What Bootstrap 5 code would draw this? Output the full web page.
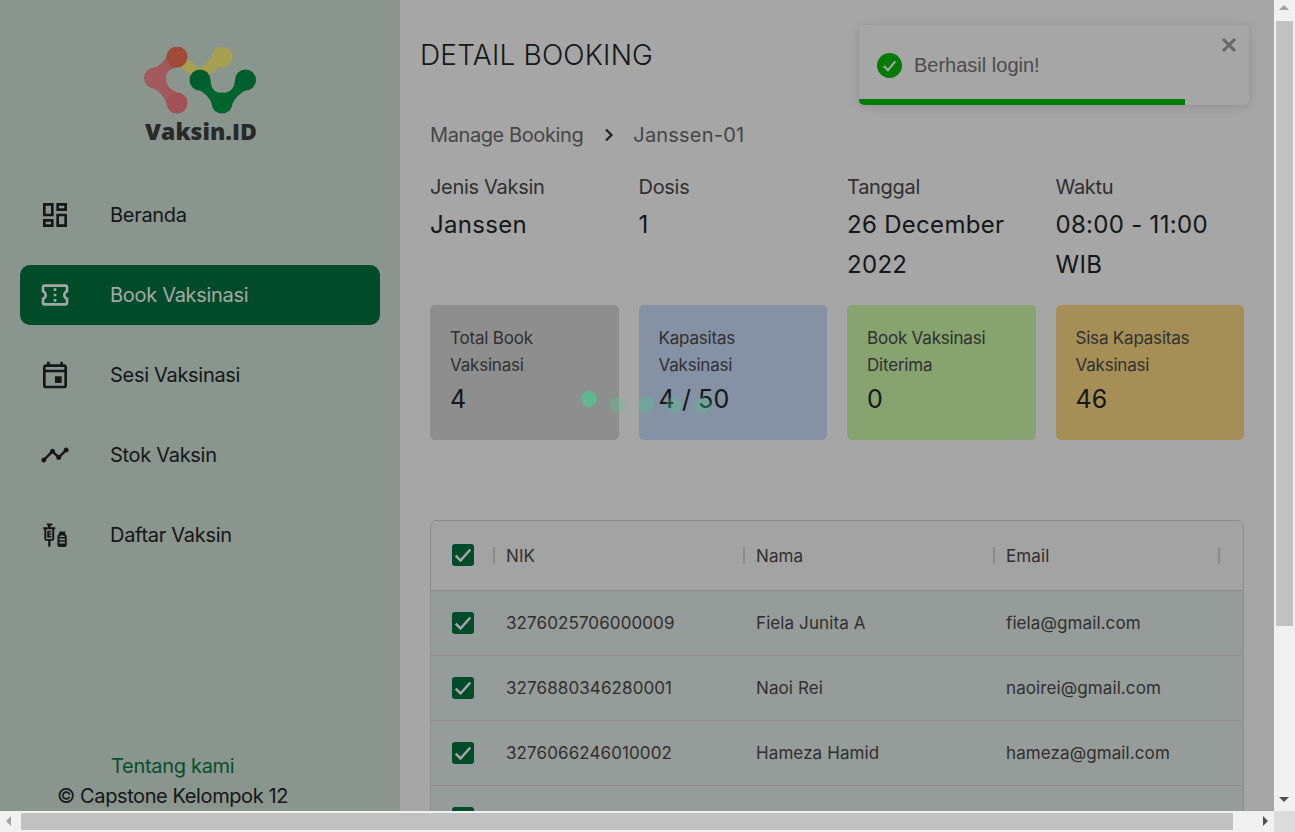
<!DOCTYPE html>
<html lang="en">
<head>
<meta charset="UTF-8">
<title>Vaksin.ID - Detail Booking</title>
<link href="https://cdn.jsdelivr.net/npm/bootstrap@5.3.0/dist/css/bootstrap.min.css" rel="stylesheet">
<style>
html, body { height: 100%; overflow: hidden; }
body { font-family: "Inter", "Liberation Sans", sans-serif; color: #212529; background: #fff; }
.shell { width: 1295px; height: 832px; }
.viewport { height: 811px; }
.frame { width: 1274px; height: 811px; overflow: hidden; }
.side { width: 400px; height: 811px; background: #d3e5d9; }
.brand { height: 185px; padding-top: 47px; }
.brand-name { font-family: "Open Sans", sans-serif; font-weight: 800; font-size: 23px; line-height: 22px; color: #404040; margin: 3px 0 0 2px; }
.side-link { height: 60px; margin: 0 20px 20px; padding-left: 19px; gap: 39px; border-radius: 10px; color: #212529; text-decoration: none; font-size: 20px; letter-spacing: -.3px; }
.side-link.active-link { background: #00733f; color: #fff; }
.side-link svg { width: 32px; height: 32px; fill: currentColor; flex: none; }
.side-foot { font-size: 20px; line-height: 30px; letter-spacing: -.4px; padding-left: 57px; margin-top: auto; height: 60px; }
.side-foot a { color: #0a7a43; text-decoration: none; margin-left: 54px; display: block; letter-spacing: -.3px; }
.page-main { width: 874px; height: 811px; padding: 0 30px; overflow: hidden; }
.page-title { font-size: 28px; font-weight: 300; line-height: 34px; margin: 38px 0 0 -10px; letter-spacing: .2px; color: #212529; }
.crumbs { margin-top: 51px; height: 24px; line-height: 24px; font-size: 20px; letter-spacing: -.4px; color: #6c6c6c; gap: 18px; }
.crumbs .crumb-now { letter-spacing: .2px; }
.crumbs svg { width: 14px; height: 14px; fill: none; stroke: #333; stroke-width: 2.2; margin-left: 1px; margin-right: -1px; }
.info-grid { display: grid; grid-template-columns: repeat(4, 188.5px); column-gap: 20px; }
.info-grid.top-info { margin-top: 26px; height: 132px; }
.info-label { font-size: 20px; line-height: 28px; letter-spacing: -.3px; color: #4a4a4a; }
.info-value { font-size: 24px; line-height: 40px; letter-spacing: .3px; margin-top: 4px; }
.stat-box { height: 135px; border-radius: 5px; padding: 20px; }
.stat-box .stat-name { font-size: 17px; line-height: 27px; letter-spacing: -.2px; color: #4a4a4a; }
.stat-box .stat-num { font-size: 25px; line-height: 32px; margin-top: 4px; letter-spacing: .1px; }
.stat-grey { background: #dadada; }
.stat-blue { background: #ccdffc; }
.stat-green { background: #d0fcac; }
.stat-yellow { background: #ffdc85; }
.grid-wrap { margin-top: 80px; width: 814px; border: 1px solid #d8d8d8; border-radius: 6px 6px 0 0; overflow: hidden; isolation: isolate; }
.grid-wrap .table { margin: 0; table-layout: fixed; width: 812px; font-size: 17px; letter-spacing: .1px; }
.grid-wrap th, .grid-wrap td { padding: 2px 0 0 12px; vertical-align: middle; font-weight: 400; border-color: #dcdcdc; color: #4a4a4a; }
.grid-wrap thead th { height: 69px; background: #fafafa; position: relative; border-bottom-color: #d8d8d8; }
.grid-wrap tbody td { height: 65px; background: #e5f0ec; }
.col-check { width: 63px; }
.col-wide { width: 250px; }
.col-end { width: 249px; }
.grid-wrap th.check-cell, .grid-wrap td.check-cell { padding: 0 0 0 21px; }
.col-sep { position: absolute; right: -1px; top: 26px; width: 2px; height: 17px; background: #d4d4d4; z-index: 1; }
.col-sep.sep-start { left: 62px; right: auto; }
.col-sep.sep-last { right: 23px; }
.tick { width: 22px; height: 22px; background: #00733f; border-radius: 3px; }
.tick svg { width: 22px; height: 22px; fill: none; stroke: #fff; stroke-width: 2.1; }
.toast-box { position: absolute; left: 859px; top: 25px; width: 390px; height: 80px; background: #fff; border-radius: 5px; box-shadow: 0 1px 10px rgba(0,0,0,.1), 0 2px 15px rgba(0,0,0,.05); overflow: hidden; font-family: "Liberation Sans", sans-serif; font-size: 20px; color: #757575; padding: 0 18px; gap: 12px; }
.toast-check { width: 25px; height: 25px; }
.toast-x { position: absolute; right: 12px; top: 12px; width: 16px; height: 16px; stroke: #9d9d9d; stroke-width: 3; }
.toast-bar { position: absolute; left: 0; bottom: 0; height: 6px; width: 326px; background: #07bc0c; }
.dim-layer { position: absolute; left: 0; top: 0; width: 1274px; height: 811px; background: rgba(0,0,0,.35); }
.dot { position: absolute; width: 16px; height: 16px; border-radius: 50%; background: #4ec98e; }
.vbar { width: 21px; height: 811px; background: #f1f1f1; padding: 21px 2px; position: relative; }
.vthumb { width: 17px; height: 605px; background: #c1c1c1; }
.hbar { height: 21px; background: #f1f1f1; padding: 2px 0 2px 21px; position: relative; }
.hthumb { width: 1212px; height: 17px; background: #c1c1c1; }
.sb-corner { position: absolute; right: 0; top: 0; width: 21px; height: 21px; background: #dcdcdc; }
.arrow { position: absolute; width: 0; height: 0; border: 5px solid transparent; }
.arrow-up { left: 5px; top: 5px; border-bottom-color: #a3a3a3; border-top: 0; }
.arrow-down { left: 5px; bottom: 9px; border-top-color: #505050; border-bottom: 0; }
.arrow-left { left: 6px; top: 5px; border-right-color: #a3a3a3; border-left: 0; }
.arrow-right { right: 27px; top: 5px; border-left-color: #505050; border-right: 0; }
</style>
</head>
<body>
<div class="shell">
  <div class="viewport d-flex">
    <div class="frame d-flex position-relative">
      <aside class="side d-flex flex-column flex-shrink-0">
        <div class="brand d-flex flex-column align-items-center">
          <svg width="112" height="70" viewBox="145 47 112 70" fill="none" stroke-linecap="round" stroke-linejoin="round">
            <path d="M178 57 201 76 223 57" stroke="#fff67b" stroke-width="11"/>
            <path fill="#fb8a90" d="M170.800 49.300Q165.600 66.400 148.300 70.300L147.700 85Q165.700 91.500 170.200 110L178 92.500Q167 88 167 78 167 69 178 67.500Z"/>
            <circle cx="178" cy="57" r="10.500" fill="#f67355"/>
            <circle cx="155.500" cy="78" r="10.500" fill="#fb8a90"/>
            <circle cx="178" cy="103" r="10.500" fill="#f67e84"/>
            <circle cx="223" cy="57" r="10.500" fill="#fff67b"/>
            <path fill="#009a45" d="M193.400 87.200Q211 92.500 215.400 110.200L230.300 110.500Q236 92.600 253.800 87.500L236 80Q235 93 223 93 212 93 211.500 80Z"/>
            <circle cx="201" cy="80" r="10.500" fill="#008f47"/>
            <circle cx="246.500" cy="80" r="10.500" fill="#008f47"/>
            <circle cx="223" cy="103" r="10.500" fill="#009a45"/>
          </svg>
          <div class="brand-name">Vaksin.ID</div>
        </div>
        <a href="#" class="side-link d-flex align-items-center">
          <svg viewBox="0 0 24 24"><path d="M19 5v2h-4V5h4M9 5v6H5V5h4m10 8v6h-4v-6h4M9 17v2H5v-2h4M21 3h-8v6h8V3zM11 3H3v10h8V3zm10 8h-8v10h8V11zm-10 4H3v6h8v-6z"/></svg>
          <span>Beranda</span>
        </a>
        <a href="#" class="side-link active-link d-flex align-items-center">
          <svg viewBox="0 0 24 24"><path d="M22 10V6c0-1.11-.9-2-2-2H4c-1.1 0-1.99.89-1.99 2v4c1.1 0 1.99.9 1.99 2s-.89 2-2 2v4c0 1.1.9 2 2 2h16c1.1 0 2-.9 2-2v-4c-1.1 0-2-.9-2-2s.9-2 2-2zm-2-1.46c-1.19.69-2 1.99-2 3.46s.81 2.77 2 3.46V18H4v-2.54c1.19-.69 2-1.99 2-3.46 0-1.48-.8-2.77-1.99-3.46L4 6h16v2.54zM11 15h2v2h-2zm0-4h2v2h-2zm0-4h2v2h-2z"/></svg>
          <span>Book Vaksinasi</span>
        </a>
        <a href="#" class="side-link d-flex align-items-center">
          <svg viewBox="0 0 24 24"><path d="M19 4h-1V2h-2v2H8V2H6v2H5c-1.11 0-1.99.9-1.99 2L3 20c0 1.1.89 2 2 2h14c1.1 0 2-.9 2-2V6c0-1.1-.9-2-2-2zm0 16H5V10h14v10zm0-12H5V6h14v2zm-7 5h5v5h-5z"/></svg>
          <span>Sesi Vaksinasi</span>
        </a>
        <a href="#" class="side-link d-flex align-items-center">
          <svg viewBox="0 0 24 24"><path transform="translate(.84 .84) scale(.93)" d="M23 8c0 1.1-.9 2-2 2-.18 0-.35-.02-.51-.07l-3.56 3.55c.05.16.07.34.07.52 0 1.1-.9 2-2 2s-2-.9-2-2c0-.18.02-.36.07-.52l-2.55-2.55c-.16.05-.34.07-.52.07s-.36-.02-.52-.07l-4.55 4.56c.05.16.07.33.07.51 0 1.1-.9 2-2 2s-2-.9-2-2 .9-2 2-2c.18 0 .35.02.51.07l4.56-4.55C8.02 9.36 8 9.18 8 9c0-1.1.9-2 2-2s2 .9 2 2c0 .18-.02.36-.07.52l2.55 2.55c.16-.05.34-.07.52-.07s.36.02.52.07l3.55-3.56C19.02 8.35 19 8.18 19 8c0-1.1.9-2 2-2s2 .9 2 2z"/></svg>
          <span>Stok Vaksin</span>
        </a>
        <a href="#" class="side-link d-flex align-items-center">
          <svg viewBox="0 0 24 24"><g transform="translate(1.4 1.6) scale(.87)"><path fill-rule="evenodd" d="M5 2h5v1.500H8.400v1.800H12.500V7H11.500V15c0 1.100-.9 2-2 2H8.300v4.500L7.300 22.500 6.300 21.500V17H5c-1.100 0-2-.9-2-2V7H2V5.300H6.100V3.500H5V2zM4.700 7V15.300H9.800V7H4.700zM5.500 8.200H9V9.600H7V10.500H9V11.800H7V12.700H9V14.100H5.500V8.200z"/><path fill-rule="evenodd" d="M16 9h5v2.300c.8.5 1.300 1.100 1.300 1.900V20.500c0 1-.8 1.700-1.800 1.700H16c-1 0-1.700-.7-1.700-1.700V13.200c0-.8.500-1.400 1.200-1.900L16 9zM17.500 12.300c-.9.3-1.500.7-1.500 1.400H20.700c0-.7-.6-1.100-1.500-1.400H17.500zM16 15V16.500H20.700V15H16zM16 17.800V19.300H20.700V17.800H16z"/></g></svg>
          <span>Daftar Vaksin</span>
        </a>
        <div class="side-foot">
          <a href="#">Tentang kami</a>
          <div>© Capstone Kelompok 12</div>
        </div>
      </aside>

      <main class="page-main flex-shrink-0">
        <h1 class="page-title">DETAIL BOOKING</h1>
        <div class="crumbs d-flex align-items-center">
          <span>Manage Booking</span>
          <svg viewBox="0 0 14 14"><path d="M4 1.500 9.500 7 4 12.500"/></svg>
          <span class="crumb-now">Janssen-01</span>
        </div>
        <div class="info-grid top-info">
          <div><div class="info-label">Jenis Vaksin</div><div class="info-value">Janssen</div></div>
          <div><div class="info-label">Dosis</div><div class="info-value">1</div></div>
          <div><div class="info-label">Tanggal</div><div class="info-value">26 December 2022</div></div>
          <div><div class="info-label">Waktu</div><div class="info-value">08:00 - 11:00 WIB</div></div>
        </div>
        <div class="info-grid">
          <div class="stat-box stat-grey"><div class="stat-name">Total Book Vaksinasi</div><div class="stat-num">4</div></div>
          <div class="stat-box stat-blue"><div class="stat-name">Kapasitas Vaksinasi</div><div class="stat-num">4 / 50</div></div>
          <div class="stat-box stat-green"><div class="stat-name">Book Vaksinasi Diterima</div><div class="stat-num">0</div></div>
          <div class="stat-box stat-yellow"><div class="stat-name">Sisa Kapasitas Vaksinasi</div><div class="stat-num">46</div></div>
        </div>
        <div class="grid-wrap">
          <table class="table">
            <thead>
              <tr>
                <th class="col-check check-cell"><span class="col-sep sep-start"></span><span class="tick d-flex align-items-center justify-content-center"><svg viewBox="0 0 18 18"><path d="M3 9.500 7 13.500 15 4.500"/></svg></span></th>
                <th class="col-wide">NIK<span class="col-sep"></span></th>
                <th class="col-wide">Nama<span class="col-sep"></span></th>
                <th class="col-end">Email<span class="col-sep sep-last"></span></th>
              </tr>
            </thead>
            <tbody>
              <tr>
                <td class="check-cell"><span class="tick d-flex align-items-center justify-content-center"><svg viewBox="0 0 18 18"><path d="M3 9.500 7 13.500 15 4.500"/></svg></span></td>
                <td>3276025706000009</td><td>Fiela Junita A</td><td>fiela@gmail.com</td>
              </tr>
              <tr>
                <td class="check-cell"><span class="tick d-flex align-items-center justify-content-center"><svg viewBox="0 0 18 18"><path d="M3 9.500 7 13.500 15 4.500"/></svg></span></td>
                <td>3276880346280001</td><td>Naoi Rei</td><td>naoirei@gmail.com</td>
              </tr>
              <tr>
                <td class="check-cell"><span class="tick d-flex align-items-center justify-content-center"><svg viewBox="0 0 18 18"><path d="M3 9.500 7 13.500 15 4.500"/></svg></span></td>
                <td>3276066246010002</td><td>Hameza Hamid</td><td>hameza@gmail.com</td>
              </tr>
              <tr>
                <td class="check-cell"><span class="tick d-flex align-items-center justify-content-center"><svg viewBox="0 0 18 18"><path d="M3 9.500 7 13.500 15 4.500"/></svg></span></td>
                <td></td><td></td><td></td>
              </tr>
            </tbody>
          </table>
        </div>
      </main>

      <div class="toast-box d-flex align-items-center">
        <svg class="toast-check flex-shrink-0" viewBox="0 0 24 24"><circle cx="12" cy="12" r="12" fill="#07bc0c"/><path d="M6.500 12.500 10.500 16.500 17.500 8" fill="none" stroke="#fff" stroke-width="2"/></svg>
        <span>Berhasil login!</span>
        <svg class="toast-x" viewBox="0 0 16 16" fill="none"><path d="M2 2 14 14M14 2 2 14"/></svg>
        <div class="toast-bar"></div>
      </div>
      <div class="dim-layer">
        <span class="dot" style="left:581px;top:391px;opacity:.7"></span>
        <span class="dot" style="left:609px;top:397px;opacity:.3"></span>
        <span class="dot" style="left:638px;top:397px;opacity:.35"></span>
        <span class="dot" style="left:666px;top:397px;opacity:.3"></span>
        <span class="dot" style="left:695px;top:397px;opacity:.3"></span>
      </div>
    </div>
    <div class="vbar flex-shrink-0">
      <span class="arrow arrow-up"></span>
      <div class="vthumb"></div>
      <span class="arrow arrow-down"></span>
    </div>
  </div>
  <div class="hbar">
    <span class="arrow arrow-left"></span>
    <div class="hthumb"></div>
    <span class="arrow arrow-right"></span>
    <span class="sb-corner"></span>
  </div>
</div>
<script src="https://cdn.jsdelivr.net/npm/bootstrap@5.3.0/dist/js/bootstrap.bundle.min.js"></script>
</body>
</html>
